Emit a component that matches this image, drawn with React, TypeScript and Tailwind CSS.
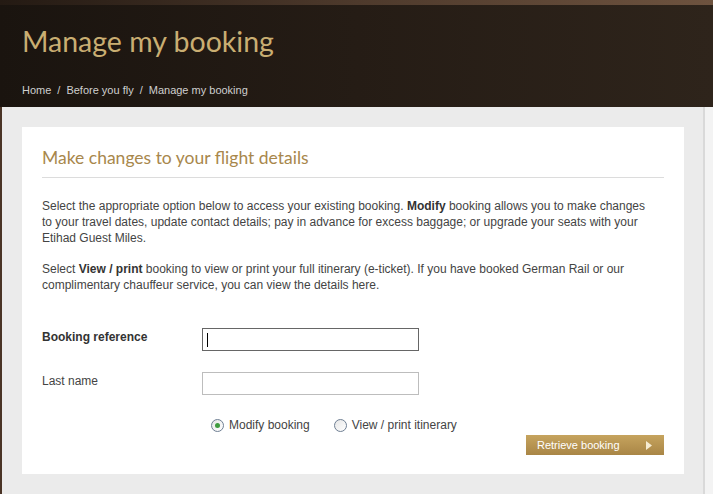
const Radio = ({ checked, label }: { checked?: boolean; label: string }) => {
  return (
    <label className="flex items-center gap-[5px] cursor-pointer">
      <span className="w-[13px] h-[13px] rounded-full border border-[#6f7f93] bg-gradient-to-br from-[#e6e6e6] to-white flex items-center justify-center">
        {checked && <span className="w-[5px] h-[5px] rounded-full bg-[#3f9b3f]" />}
      </span>
      <span>{label}</span>
    </label>
  );
};

const App = () => {
  return (
    <div className="w-[713px] h-[499px] bg-white overflow-hidden font-['Liberation_Sans',Arial,sans-serif]">
      <div className="h-[5px] bg-gradient-to-r from-[#241a13] via-[#4e3a2c] to-[#6e533f]" />
      <div className="h-[102px] bg-gradient-to-r from-[#1a140f] via-[#251c15] to-[#2e241b] px-[22px] pt-[19px]">
        <h1 className="text-[28.5px] leading-[34px] text-[#c9ae72] font-['Lato',sans-serif]">
          Manage my booking
        </h1>
        <div className="mt-[25px] text-[11px] leading-[14px] text-[#cfcfcf] flex gap-[6px]">
          <span>Home</span>
          <span>/</span>
          <span>Before you fly</span>
          <span>/</span>
          <span>Manage my booking</span>
        </div>
      </div>

      <div className="flex h-[387px]">
        <div className="w-[2px] bg-[#4a3426]" />
        <div className="w-[701px] bg-[#ebebeb] pl-[20px] pr-[19px] pt-[20px]">
          <div className="h-[347px] bg-white px-[20px] pt-[20px] text-[#444]">
            <h2 className="text-[17.5px] leading-[22px] text-[#a8874c] font-['Lato',sans-serif] pb-[8px] border-b border-[#dcdcdc]">
              Make changes to your flight details
            </h2>
            <p className="mt-[20px] text-[12px] leading-[16px]">
              Select the appropriate option below to access your existing booking.{' '}
              <b className="text-[#333]">Modify</b> booking allows you to make changes
              <br />
              to your travel dates, update contact details; pay in advance for excess baggage; or upgrade your seats
              with your
              <br />
              Etihad Guest Miles.
            </p>
            <p className="mt-[15px] text-[12px] leading-[16px]">
              Select <b className="text-[#333]">View / print</b> booking to view or print your full itinerary
              (e-ticket). If you have booked German Rail or our
              <br />
              complimentary chauffeur service, you can view the details here.
            </p>

            <div className="mt-[35px] flex items-start text-[12px] leading-[16px]">
              <span className="w-[160px] pt-[1px] font-bold text-[#333]">Booking reference</span>
              <div className="w-[217px] h-[23px] border border-[#666] bg-white flex items-center pl-[4px]">
                <span className="w-[1px] h-[14px] bg-black" />
              </div>
            </div>
            <div className="mt-[21px] flex items-start text-[12px] leading-[16px]">
              <span className="w-[160px] pt-[1px]">Last name</span>
              <div className="w-[217px] h-[23px] border border-[#bdbdbd] bg-white" />
            </div>

            <div className="mt-[22px] pl-[169px] flex gap-[24px] text-[12px] leading-[16px]">
              <Radio checked label="Modify booking" />
              <Radio label="View / print itinerary" />
            </div>

            <div className="mt-[2px] flex justify-end">
              <button className="w-[138px] h-[20px] bg-gradient-to-b from-[#c6a45e] to-[#a98646] text-white text-[11px] leading-[20px] pl-[11px] pr-[12px] flex items-center justify-between">
                <span>Retrieve booking</span>
                <svg width="6" height="9" viewBox="0 0 6 9">
                  <path d="M0 0 L6 4.5 L0 9 Z" fill="#f6ecd2" />
                </svg>
              </button>
            </div>
          </div>
        </div>
        <div className="w-[2px] bg-[#d9d9d9]" />
        <div className="flex-1 bg-[#f3f3f3]" />
      </div>
    </div>
  );
};

export default App;
